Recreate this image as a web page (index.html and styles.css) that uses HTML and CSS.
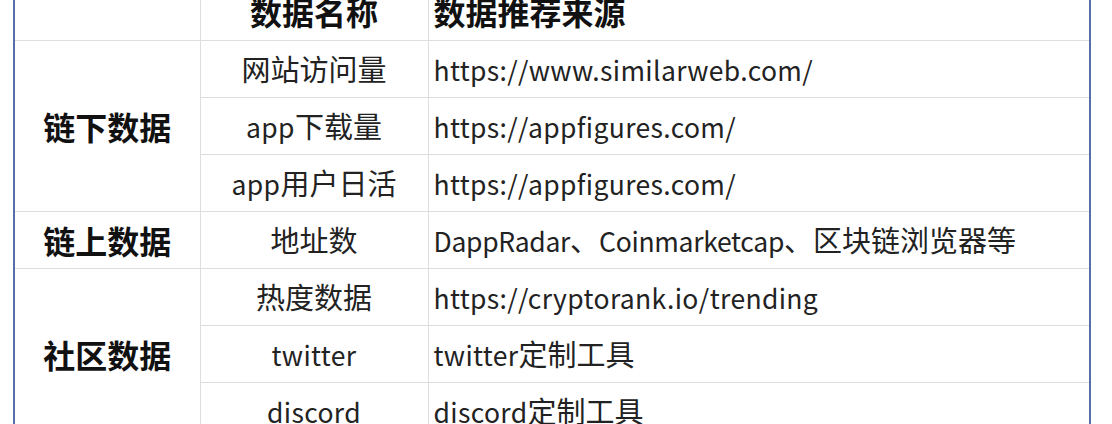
FILE: index.html
```html
<!DOCTYPE html>
<html lang="zh-CN">
<head>
<meta charset="utf-8">
<link rel="stylesheet" href="styles.css">
</head>
<body>
<div class="frame">
<table class="data">
  <colgroup>
    <col class="c1"><col class="c2"><col class="c3">
  </colgroup>
  <thead>
    <tr><th></th><th class="center">数据名称</th><th class="left">数据推荐来源</th></tr>
  </thead>
  <tbody>
    <tr><td class="group" rowspan="3">链下数据</td><td class="name">网站访问量</td><td class="src"><span class="lat">https://www.similarweb.com/</span></td></tr>
    <tr><td class="name"><span class="lat">app</span>下载量</td><td class="src"><span class="lat">https://appfigures.com/</span></td></tr>
    <tr><td class="name"><span class="lat">app</span>用户日活</td><td class="src"><span class="lat">https://appfigures.com/</span></td></tr>
    <tr><td class="group">链上数据</td><td class="name">地址数</td><td class="src"><span class="lat tight">DappRadar</span>、<span class="lat tight">Coinmarketcap</span>、区块链浏览器等</td></tr>
    <tr><td class="group" rowspan="3">社区数据</td><td class="name">热度数据</td><td class="src"><span class="lat">https://cryptorank.io/trending</span></td></tr>
    <tr><td class="name"><span class="lat">twitter</span></td><td class="src"><span class="lat">twitter</span>定制工具</td></tr>
    <tr><td class="name"><span class="lat">discord</span></td><td class="src"><span class="lat">discord</span>定制工具</td></tr>
  </tbody>
</table>
</div>
</body>
</html>
```
FILE: styles.css
```css
html, body {
  margin: 0;
  padding: 0;
  background: #ffffff;
  overflow: hidden;
}
.frame {
  margin: -17px 0 0 13px;
  width: 1078px;
}
.data {
  width: 1078px;
  border-collapse: collapse;
  table-layout: fixed;
  border-left: 2px solid #5670a9;
  border-right: 2px solid #5670a9;
  font-family: "Noto Sans CJK SC", "Noto Sans", sans-serif;
  color: #222222;
}
.c1 { width: 186px; }
.c2 { width: 228px; }
.c3 { width: auto; }
.data th, .data td {
  height: 57px;
  padding: 0 5px;
  border: 1px solid #dedede;
  box-sizing: border-box;
  white-space: nowrap;
  vertical-align: middle;
}
.data thead tr th { border-top: none; }
.data th {
  font-size: 32px;
  font-weight: 700;
  color: #111111;
  line-height: 1;
}
.center { text-align: center; }
.left { text-align: left; }
.group {
  font-size: 32px;
  font-weight: 700;
  color: #111111;
  text-align: center;
  line-height: 1;
}
.name {
  font-size: 29px;
  text-align: center;
  line-height: 1;
  padding-top: 4px;
}
.src {
  font-size: 29px;
  text-align: left;
  line-height: 1;
  padding-top: 4px;
}
.lat {
  font-size: 26.5px;
  letter-spacing: 0.35px;
}
.lat.tight {
  letter-spacing: -0.3px;
}
```
